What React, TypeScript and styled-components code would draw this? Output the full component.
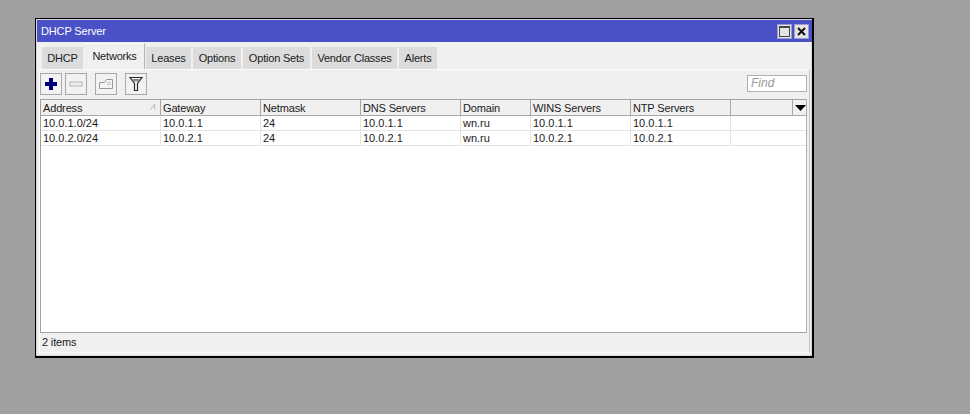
import React from "react";
import styled, { createGlobalStyle } from "styled-components";

const Global = createGlobalStyle`
  html, body { margin: 0; padding: 0; background: #a0a0a0; }
  body { font-family: "Liberation Sans", Arial, sans-serif; font-size: 11px; color: #1a1a1a; }
  #root { width: 970px; height: 414px; overflow: hidden; }
`;
const Page = styled.div`
  width: 970px; height: 414px; box-sizing: border-box; padding: 18px 0 0 35px; background: #a0a0a0;
`;
const Win = styled.div`
  width: 779px; height: 340px; box-sizing: border-box; display: flex; flex-direction: column;
  background: #f0f0f0; border: 1px solid #000; border-right-width: 2px; border-bottom-width: 2px;
  box-shadow: inset 0 0 0 1px #d8d8d8;
`;
const TitleBar = styled.div`
  height: 22px; margin: 1px 0 0 1px; padding: 0 3px 0 4px; flex: none; display: flex; align-items: center; justify-content: space-between;
  background: #4a51c6; color: #fff; font-size: 11px; letter-spacing: -0.15px;
`;
const TitleBtns = styled.div`display: flex; gap: 2px;`;
const TitleBtn = styled.div`
  width: 15px; height: 15px; background: #e4e4e4; border: 1px solid #9a9ad0; box-sizing: border-box;
  display: flex; align-items: center; justify-content: center;
`;
const Tabs = styled.div`
  display: flex; height: 27px; padding: 2px 0 0 6px; flex: none; box-sizing: border-box; align-items: flex-end; gap: 1px;
`;
const Tab = styled.div<{ $active?: boolean; $w: number }>`
  box-sizing: border-box; display: flex; align-items: center; justify-content: center;
  width: ${p => p.$w}px;
  height: ${p => (p.$active ? 26 : 22)}px;
  padding-bottom: ${p => (p.$active ? 1 : 2)}px;
  background: ${p => (p.$active ? "#f0f0f0" : "#dcdcdc")};
  border-right: 1px solid ${p => (p.$active ? "#b4b4b4" : "#f0f0f0")};
  border-top: 1px solid ${p => (p.$active ? "#fafafa" : "#dcdcdc")};
  letter-spacing: -0.2px;
`;
const Panel = styled.div`
  flex: 1; min-height: 0; margin: 0 2px 3px 3px; display: flex; flex-direction: column;
  border: 1px solid #fbfbfb; border-right-color: #c4c4c4; border-bottom-color: #fafafa;
`;
const Toolbar = styled.div`
  height: 29px; flex: none; padding: 0 1px 2px 0; display: flex; align-items: center; box-sizing: border-box;
`;
const ToolBtn = styled.div<{ $gap?: number }>`
  width: 22px; height: 22px; box-sizing: border-box; margin-right: ${p => p.$gap ?? 0}px;
  border: 1px solid #a8a8a8; background: #f2f2f2; display: flex; align-items: center; justify-content: center;
`;
const Find = styled.div`
  margin-left: auto; margin-right: 1px; width: 60px; height: 17px; box-sizing: border-box; padding-left: 3px;
  border: 1px solid #b0b0b0; background: #fff; color: #9a9a9a; font-style: italic; font-size: 12px; line-height: 15px;
`;
const Table = styled.div`
  flex: 1; min-height: 0; margin-right: 2px; background: #fff; border: 1px solid #a0a0a0; border-right-color: #b0b0b0;
  display: flex; flex-direction: column;
`;
const Cols = "120px 100px 100px 100px 70px 100px 100px 62px 14px";
const Head = styled.div`
  display: grid; grid-template-columns: ${Cols}; height: 16px; flex: none; box-sizing: border-box; background: #f0f0f0; border-bottom: 1px solid #a8a8a8;
`;
const HCell = styled.div`
  position: relative; box-sizing: border-box; padding-left: 2px; line-height: 17px; height: 15px; white-space: nowrap;
  border-right: 1px solid #a8a8a8; letter-spacing: -0.15px;
  &:last-child { border-right: 0; }
`;
const SortMark = styled.svg`position: absolute; right: 4px; top: 4px;`;
const MenuMark = styled.svg`position: absolute; left: 2px; top: 5px;`;
const Row = styled.div`
  display: grid; grid-template-columns: ${Cols}; height: 15px; flex: none; box-sizing: border-box; border-bottom: 1px solid #e4e4e4;
`;
const Cell = styled.div`
  box-sizing: border-box; padding-left: 2px; line-height: 14px; white-space: nowrap;
  border-right: 1px solid #e4e4e4;
  &:last-child { border-right: 0; }
`;
const Status = styled.div`
  height: 19px; flex: none; padding-left: 2px; line-height: 18px; letter-spacing: -0.15px;
`;

const headers = ["Address", "Gateway", "Netmask", "DNS Servers", "Domain", "WINS Servers", "NTP Servers", ""];
const rows = [
  ["10.0.1.0/24", "10.0.1.1", "24", "10.0.1.1", "wn.ru", "10.0.1.1", "10.0.1.1", ""],
  ["10.0.2.0/24", "10.0.2.1", "24", "10.0.2.1", "wn.ru", "10.0.2.1", "10.0.2.1", ""],
];
const tabs: [string, number][] = [
  ["DHCP", 42], ["Networks", 60], ["Leases", 46], ["Options", 49], ["Option Sets", 68], ["Vendor Classes", 86], ["Alerts", 39],
];

export default function App() {
  return (
    <Page>
      <Global />
      <Win>
        <TitleBar>
          <span>DHCP Server</span>
          <TitleBtns>
            <TitleBtn>
              <svg width="11" height="11" viewBox="0 0 11 11"><rect x="0.5" y="0.5" width="10" height="10" fill="none" stroke="#444" /><rect x="0" y="0" width="11" height="2" fill="#444" /></svg>
            </TitleBtn>
            <TitleBtn>
              <svg width="9" height="9" viewBox="0 0 9 9"><path d="M1 1l7 7M8 1l-7 7" stroke="#111" strokeWidth="2" /></svg>
            </TitleBtn>
          </TitleBtns>
        </TitleBar>
        <Tabs>
          {tabs.map(([t, w]) => (
            <Tab key={t} $active={t === "Networks"} $w={w}>{t}</Tab>
          ))}
        </Tabs>
        <Panel>
          <Toolbar>
            <ToolBtn $gap={3}>
              <svg width="14" height="14" viewBox="0 0 14 14"><path d="M5 1h4v4h4v4H9v4H5V9H1V5h4z" fill="#00007e" /></svg>
            </ToolBtn>
            <ToolBtn $gap={8}>
              <svg width="14" height="6" viewBox="0 0 14 6"><rect x="1" y="1" width="12" height="4" fill="#ececec" stroke="#b8b8b8" /></svg>
            </ToolBtn>
            <ToolBtn $gap={8}>
              <svg width="16" height="12" viewBox="0 0 16 12"><path d="M1.5 4.5h5l2-3h6v9h-13z" fill="#f4f4f4" stroke="#9a9a9a" /><path d="M9 4.5h4M9 6.5h4" stroke="#bcbcbc" /></svg>
            </ToolBtn>
            <ToolBtn>
              <svg width="14" height="16" viewBox="0 0 14 16"><path d="M1 1.5h12L8.5 7.5v7h-3v-7z" fill="#f4f4f4" stroke="#2a2a2a" strokeWidth="1.2" /><path d="M2.5 3h9L9.5 5.5h-5z" fill="#8a8a8a" /></svg>
            </ToolBtn>
            <Find>Find</Find>
          </Toolbar>
          <Table>
            <Head>
              {headers.map((h, i) => (
                <HCell key={i}>
                  {h}
                  {i === 0 && <SortMark width="6" height="6" viewBox="0 0 6 6"><path d="M0.5 5.5L4.5 0.5L5 5.5" fill="none" stroke="#b4b4b4" /></SortMark>}
                </HCell>
              ))}
              <HCell>
                <MenuMark width="11" height="6" viewBox="0 0 11 6"><path d="M0 0h11L5.5 6z" fill="#000" /></MenuMark>
              </HCell>
            </Head>
            {rows.map((r, i) => (
              <Row key={i}>
                {r.map((c, j) => <Cell key={j}>{c}</Cell>)}
              </Row>
            ))}
          </Table>
          <Status>2 items</Status>
        </Panel>
      </Win>
    </Page>
  );
}
